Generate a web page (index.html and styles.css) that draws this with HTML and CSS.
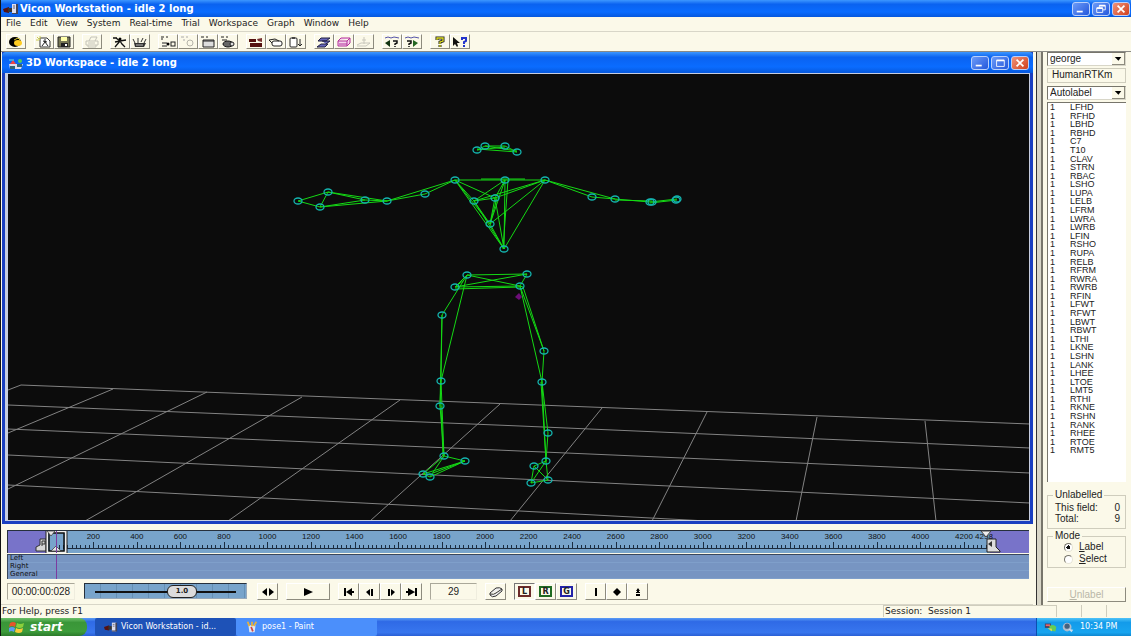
FILE: index.html
```html
<!DOCTYPE html>
<html lang="en">
<head>
<meta charset="utf-8">
<title>Vicon Workstation - idle 2 long</title>
<link rel="stylesheet" href="styles.css">
</head>
<body>
<svg class="defs" aria-hidden="true">
  <symbol id="camera" viewBox="0 0 16 12"><path d="M0 6l6-2v6l-5-1z" fill="#511"/><rect x="5" y="5" width="5" height="4" fill="#333"/><path d="M9 1h5v10H9z" fill="#dde"/><path d="M13 1h2v10h-6v-1h4z" fill="#445"/><path d="M10 3h2M10 5h2" stroke="#667"/></symbol>
  <symbol id="min" viewBox="0 0 18 14"><path d="M4 9h7v2H4z" fill="#fff"/></symbol>
  <symbol id="close" viewBox="0 0 18 14"><path d="M5 3l8 8M13 3l-8 8" stroke="#fff" stroke-width="2"/></symbol>
</svg>

<header class="titlebar">
  <svg class="app-icon"><use href="#camera"/></svg>
  <h1>Vicon Workstation - idle 2 long</h1>
  <div class="caption-buttons">
    <button aria-label="Minimize"><svg><use href="#min"/></svg></button>
    <button aria-label="Restore"><svg viewBox="0 0 18 14"><path d="M7 6V3h7v5h-3M4 6h7v5H4z" fill="none" stroke="#fff"/><path d="M4 6h7M7 3h7" stroke="#fff" stroke-width="2"/></svg></button>
    <button class="close" aria-label="Close"><svg><use href="#close"/></svg></button>
  </div>
</header>

<nav class="menubar">
  <a href="#">File</a><a href="#">Edit</a><a href="#">View</a><a href="#">System</a><a href="#">Real-time</a><a href="#">Trial</a><a href="#">Workspace</a><a href="#">Graph</a><a href="#">Window</a><a href="#">Help</a>
</nav>

<div class="toolbar">
  <div class="group">
    <button aria-label="Live"><svg viewBox="0 0 16 12"><ellipse cx="7" cy="6" rx="6" ry="5"/><ellipse cx="10" cy="7" rx="4" ry="3" fill="#fc2"/><path d="M6 4l4-2 2 2" stroke="#dc3" fill="none"/></svg></button>
  </div>
  <div class="group">
    <button aria-label="Open trial"><svg viewBox="0 0 16 12"><path d="M4 2h7l3 3v6H4z" fill="#fff" stroke="#333"/><path d="M6 10l3-4 3 4M7 5l4 1M9 3v3" stroke="#222" fill="none"/><path d="M1 1l3 3M4 0v3M0 4h3" stroke="#cc5"/></svg></button>
    <button aria-label="Save"><svg viewBox="0 0 16 12"><path d="M2 1h12v10H2z" fill="#775" stroke="#222"/><path d="M5 1h6v4H5z" fill="#ffa"/><path d="M5 7h7v4H5z" fill="#222"/><path d="M9 8h2v2H9z" fill="#fff"/></svg></button>
  </div>
  <div class="group">
    <button aria-label="Print" disabled><svg viewBox="0 0 16 12"><path d="M5 5l2-4h6l-2 4M2 5h12v4H2zM4 9v2h8V9M4 7h7" fill="none" stroke="#c4c3b8"/></svg></button>
  </div>
  <div class="group">
    <button aria-label="Capture subject"><svg viewBox="0 0 16 12"><path d="M1 2h4M4 2l4 3 6-1M8 5l-5 6M8 5l2 3 3 3M3 6l5-1" stroke="#111" fill="none" stroke-width="1.300"/><circle cx="8" cy="3" r="1.500"/></svg></button>
    <button aria-label="Calibrate"><svg viewBox="0 0 16 12"><path d="M2 7h12l-2 4H3z" fill="#333"/><path d="M3 7L1 3M6 7V2M9 6l2-4M12 7l2-4" stroke="#333"/><path d="M4 9h7" stroke="#bbb"/></svg></button>
  </div>
  <div class="group">
    <button aria-label="Reconstruct"><svg viewBox="0 0 16 12"><path d="M1 1h3M6 1h2M1 3h2M2 7h5M2 10h5" fill="none" stroke="#222"/><circle cx="8" cy="8" r="1.500"/><rect x="11" y="6" width="4" height="4" fill="none" stroke="#222"/></svg></button>
    <button aria-label="Label" disabled><svg viewBox="0 0 16 12"><path d="M1 1h3M6 1h2M3 4h2" stroke="#aaa"/><circle cx="10" cy="7" r="3" fill="none" stroke="#b5b4aa"/></svg></button>
    <button aria-label="Trajectory window"><svg viewBox="0 0 16 12"><path d="M1 1h3M6 1h2" stroke="#222"/><path d="M3 4h11v7H3z" fill="#ddd" stroke="#222"/><path d="M3 5h11" stroke="#222"/></svg></button>
    <button aria-label="Pipeline"><svg viewBox="0 0 16 12"><path d="M1 1h3M6 1h2M2 4h5" stroke="#222"/><ellipse cx="8" cy="8" rx="5" ry="3" fill="#666" stroke="#111"/><circle cx="12" cy="8" r="2" fill="#ddd" stroke="#222"/></svg></button>
  </div>
  <div class="group">
    <button aria-label="Video"><svg viewBox="0 0 16 12"><path d="M1 3h7v3H1zM2 7h12v4H2z" fill="#511"/><path d="M9 3l5-1v4l-4-1z" fill="#733"/></svg></button>
    <button aria-label="Tape"><svg viewBox="0 0 16 12"><rect x="4" y="5" width="10" height="5" rx="2" fill="#fff" stroke="#222"/><path d="M4 7L1 4l6-1 4 2" fill="none" stroke="#222"/></svg></button>
    <button aria-label="Copy down"><svg viewBox="0 0 16 12"><rect x="2" y="2" width="7" height="9" rx="1" fill="#fff" stroke="#222"/><path d="M4 1h3v2H4z" fill="#444"/><path d="M12 3v7M10 8l2 2 2-2" stroke="#222" fill="none"/></svg></button>
  </div>
  <div class="group">
    <button aria-label="3D workspace"><svg viewBox="0 0 16 12"><path d="M5 2h9l-4 3H2zM6 5h8l-4 3M5 8h7l-3 3H1z" fill="#66b" stroke="#224"/></svg></button>
    <button aria-label="Volume"><svg viewBox="0 0 16 12"><path d="M2 5l3-3h9v5l-3 3H2zM2 5h9l3-3M11 5v5M3 8h8" fill="#f6d5ee" stroke="#b2309b"/></svg></button>
    <button aria-label="Axes" disabled><svg viewBox="0 0 16 12"><path d="M8 1v7M6 4h4M1 9l4-2h9l-4 3H1" fill="none" stroke="#c8c7bc"/></svg></button>
  </div>
  <div class="group">
    <button aria-label="Previous unlabelled"><svg viewBox="0 0 16 12"><path d="M1 2l3-1 3 1 3-1 5 1" fill="none" stroke="#55a"/><path d="M6 4v7L1 7z" fill="#131"/><path d="M9 5h4v2l-2 1v1M11 10v1" fill="none" stroke="#111" stroke-width="1.500"/></svg></button>
    <button aria-label="Next unlabelled"><svg viewBox="0 0 16 12"><path d="M1 2l3-1 3 1 3-1 5 1" fill="none" stroke="#55a"/><path d="M9 4v7l5-4z" fill="#262"/><path d="M3 5h4v2L5 8v1M5 10v1" fill="none" stroke="#111" stroke-width="1.500"/></svg></button>
  </div>
  <div class="group">
    <button aria-label="Help"><svg viewBox="0 0 16 12"><path d="M5 4V2h6v3L8 6v2M8 9v2" fill="none" stroke="#222" stroke-width="3"/><path d="M5 4V2h6v3L8 6v2M8 9v2" fill="none" stroke="#dd2" stroke-width="1.300"/></svg></button>
    <button aria-label="Context help"><svg viewBox="0 0 16 12"><path d="M1 1v9l2-2 2 3 1-1-1-3h3z" fill="#111"/><path d="M10 4V2h4v3l-2 1v2M12 9v2" fill="none" stroke="#23c" stroke-width="2"/></svg></button>
  </div>
</div>

<main class="main">
  <div class="left">
    <section class="child">
      <header class="child-title">
        <svg class="app-icon" viewBox="0 0 16 12"><path d="M1 7h14l-2 5H2z" fill="#dde"/><path d="M2 7l3-4 3 4z" fill="#e44"/><circle cx="12" cy="4" r="2" fill="#5c5"/><path d="M2 9h5v3H2zM9 7h5v3H9z" fill="#367"/><path d="M1 3h5" stroke="#6dd"/></svg>
        <h2>3D Workspace - idle 2 long</h2>
        <div class="caption-buttons">
          <button aria-label="Minimize"><svg><use href="#min"/></svg></button>
          <button aria-label="Maximize"><svg viewBox="0 0 18 14"><path d="M5 4h9v7H5z" fill="none" stroke="#fff"/><path d="M5 4h9" stroke="#fff" stroke-width="2"/></svg></button>
          <button class="close" aria-label="Close"><svg><use href="#close"/></svg></button>
        </div>
      </header>
      <svg class="scene" viewBox="8 73 1021 448" preserveAspectRatio="xMidYMid slice" role="img" aria-label="Captured skeleton on floor grid">
        <path class="floor" d="M8 390L21 385L1030 424M8 405L520 426L1030 448M8 429L520 451L1030 473M8 455L520 479L1030 503M8 485L520 511L707 521M113 389L8 433M207 392L8 489M302 397L85 521M400 400L228 521M500 404L370 521M602 408L510 521M707 412L652 521M817 417L796 521M925 421L936 521"/>
        <path class="bones" d="M477 150L485 146L505 146L517 152L477 149M485 146L517 151M477 150L505 147
          M455 180L545 180M481 179H525M455 180L425 194L387 201L455 180M387 201L365 200L328 192L298 201L320 207L387 201L328 192L320 207L365 200
          M545 180L592 197L615 199L545 180M615 199L650 202L677 199M615 200L652 201M650 203L677 200
          M455 180L474 201L490 224L504 249L455 180L495 198M455 180L490 224M505 180L474 201L495 198L545 180L474 201M505 180L490 224L495 198L505 180L504 249L495 198M508 180L503 249M545 180L490 224M545 180L504 249M474 201L504 249M490 224L497 198
          M467 275L527 274L520 286L455 287L467 275L520 286M527 274L455 287M455 289L520 287
          M467 275L442 315L441 381L440 406L444 456L441 381L467 275M455 287L464 280M442 315L440 406M443 456L441 406
          M520 286L544 351L542 382L520 286L523 287L544 351M542 382L548 433L546 461L542 382M541 382L546 461
          M444 456L465 461L423 474L430 477L444 456L423 474M465 461L430 477M433 473L465 461
          M546 461L534 466L531 483L548 480L546 461L531 483M534 466L548 480"/>
        <g class="joints" id="joints"></g>
        <path d="M515 297l4-4 3 4-3 3z" fill="#6d0e78"/>
      </svg>
    </section>

    <svg class="ruler" viewBox="7 530 1022 23" role="img" aria-label="Timeline">
      <path d="M7 530H1029V553H7z" fill="#78a4cb"/>
      <path d="M7 530H46V553H7zM990 530H1029V553H990z" fill="#7873c9"/>
      <path d="M7 530.5H1029M7.500 530V553" stroke="#26303c"/>
      <g id="ticks"></g>
      <path d="M36 551v-4l4-2v-6h6v12z" fill="#d6d6d6" stroke="#333"/>
      <path d="M47 532h19v20H47z" fill="none" stroke="#eee" stroke-width="2"/>
      <path d="M49 533h15v18H49z" fill="none" stroke="#111" stroke-width="1.500"/>
      <path d="M67 531v22M46 531v22" stroke="#222"/>
      <path d="M47 531h8l-4 5zM51 551l5-5 5 5z" fill="#e5e5e5" stroke="#333" stroke-width=".7"/>
      <path d="M42 541v5M42 541h3v3h-3" stroke="#333" fill="none"/>
      <path d="M56.500 531V553" stroke="#7c3ca0"/>
      <path d="M981 531h10l-5 6z" fill="#eee" stroke="#444"/>
      <path d="M987 539h9v8l4 4v1h-13z" fill="#ddd" stroke="#222"/>
      <path d="M992 541v6l-4-3z" fill="#333"/>
    </svg>

    <div class="tracks">
      <div>Left</div><div>Right</div><div>General</div>
      <i class="playhead"></i>
    </div>

    <div class="controls">
      <output class="sunken timecode">00:00:00:028</output>
      <label class="speed"><span>1.0</span><input type="range" aria-label="Playback speed" min="0" max="164" value="100"></label>
      <div class="group"><button aria-label="Jog"><svg viewBox="0 0 16 12"><path d="M7 2v8L2 6zM9 2v8l5-4z"/></svg></button></div>
      <div class="group"><button class="play" aria-label="Play"><svg viewBox="0 0 16 12"><path d="M4 2l9 4-9 4z"/></svg></button></div>
      <div class="group">
        <button aria-label="First frame"><svg viewBox="0 0 16 12"><path d="M3 2h2v8H3zM11 2v8L5 6zM11 5h2v2h-2z"/></svg></button>
        <button aria-label="Previous frame"><svg viewBox="0 0 16 12"><path d="M8 3v7L4 6zM9 3h2v7H9z"/></svg></button>
        <button aria-label="Next frame"><svg viewBox="0 0 16 12"><path d="M8 3v7l4-4zM5 3h2v7H5z"/></svg></button>
        <button aria-label="Last frame"><svg viewBox="0 0 16 12"><path d="M11 2h2v8h-2zM4 2v8l7-4zM2 5h2v2H2z"/></svg></button>
      </div>
      <output class="sunken frame">29</output>
      <div class="group"><button aria-label="Erase"><svg viewBox="0 0 16 12"><path d="M2 7l6-5q4-1 6 1v2l-6 5q-4 2-6-1zM2 8q4 1 6-1l6-4" fill="#eee" stroke="#333"/></svg></button></div>
      <div class="group">
        <button class="chip red" aria-pressed="true"><span>L</span></button>
        <button class="chip green"><span>R</span></button>
        <button class="chip blue"><span>G</span></button>
      </div>
      <div class="group">
        <button aria-label="Event line"><svg viewBox="0 0 16 12"><path d="M7 2h2v8H7z"/></svg></button>
        <button aria-label="Event diamond"><svg viewBox="0 0 16 12"><path d="M8 2l4 4-4 4-4-4z"/></svg></button>
        <button aria-label="Event general"><svg viewBox="0 0 16 12"><path d="M8 2l2 3H9v1h1v1H6V6h1V5H6zM6 8h4v2H6z"/></svg></button>
      </div>
    </div>
  </div>

  <div class="splitter"></div>

  <aside class="side">
    <div class="combo"><select aria-label="Subject"><option>george</option></select><svg viewBox="0 0 13 11"><path d="M3 4h7l-3 4z"/></svg></div>
    <div class="model">HumanRTKm</div>
    <div class="combo"><select aria-label="Labelling mode"><option>Autolabel</option></select><svg viewBox="0 0 13 11"><path d="M3 4h7l-3 4z"/></svg></div>
    <ul class="markers" id="markers"></ul>
    <fieldset class="box unlabelled">
      <legend>Unlabelled</legend>
      <dl><dt>This field:</dt><dd>0</dd><dt>Total:</dt><dd>9</dd></dl>
    </fieldset>
    <fieldset class="box mode">
      <legend>Mode</legend>
      <label><input type="radio" name="mode" checked><span><u>L</u>abel</span></label>
      <label><input type="radio" name="mode"><span><u>S</u>elect</span></label>
    </fieldset>
    <button class="unlabel" disabled><u>U</u>nlabel</button>
  </aside>
</main>

<footer class="status">
  <span class="hint">For Help, press F1</span>
  <span class="session">Session:&nbsp; Session 1</span>
  <i></i><i></i><i></i>
</footer>

<div class="taskbar">
  <button class="start">
    <svg viewBox="0 0 16 14"><path d="M1 3q3-2 6 0L6 7Q3 5 0 7z" fill="#e8542a"/><path d="M8 3q3 2 7 0l-1 4q-3 2-7 0z" fill="#8bd03c"/><path d="M0 8q3-2 6 0l-1 4q-3-2-5 0z" fill="#5b9bf0"/><path d="M7 8q3 2 7 0l-1 4q-3 2-7 0z" fill="#f8cb38"/></svg>
    start
  </button>
  <button class="task active"><svg><use href="#camera"/></svg>Vicon Workstation - id...</button>
  <button class="task"><svg viewBox="0 0 16 12"><path d="M4 4h8l-1 8H5z" fill="#dfe6f2"/><path d="M5 5L3 0M8 5V0M10 5l3-5" stroke="#e8b23a" stroke-width="2"/><path d="M7 6l2 5" stroke="#c44" stroke-width="2"/></svg>pose1 - Paint</button>
  <div class="tray">
    <svg viewBox="0 0 16 12"><path d="M1 2h7v5H1z" fill="#446"/><path d="M2 3h5v2H2z" fill="#e66"/><path d="M6 5q5-3 8 1l-1 5-6-1z" fill="#6c5"/><path d="M4 7l5 1v3z" fill="#dd5"/></svg>
    <svg viewBox="0 0 16 12"><circle cx="7" cy="6" r="5" fill="#aebccd"/><circle cx="7" cy="5" r="3" fill="#45617e"/><path d="M8 8l6 1-2 3z" fill="#cde"/></svg>
    <time>10:34 PM</time>
  </div>
</div>
<script src="app.js"></script>
</body>
</html>
```

FILE: styles.css
```css
* { box-sizing: border-box; }

:root {
  --face: #fbf9e9;
  --line: #8d8b7e;
  --ui: "DejaVu Sans", Verdana, sans-serif;
  --dialog: "Liberation Sans", Arial, sans-serif;
}

body {
  margin: 0;
  height: 100vh;
  display: flex;
  flex-direction: column;
  overflow: hidden;
  background: var(--face);
  border-left: 1px solid #111;
  color: #222;
  font: 9px/12px var(--ui);
}

button, select, input { font: inherit; color: inherit; margin: 0; padding: 0; }
a { color: inherit; text-decoration: none; }
h1, h2 { margin: 0; font-size: 10px; line-height: 14px; }
.defs { position: absolute; width: 0; height: 0; }

.titlebar, .child-title {
  display: flex;
  align-items: center;
  color: #fff;
  background: linear-gradient(#3d97ff, #0a62f0 25%, #0a6cff 70%, #0658dd);
}
.titlebar { height: 17px; padding: 0 1px 0 2px; gap: 1px; flex: none; }
.app-icon { width: 16px; height: 12px; }
.caption-buttons { margin-left: auto; display: flex; gap: 2px; }
.caption-buttons button {
  width: 18px;
  height: 14px;
  border: 1px solid #b9d0fb;
  border-radius: 3px;
  background: linear-gradient(135deg, #6c9bf8, #2458dc);
}
.caption-buttons .close { background: linear-gradient(135deg, #f0937a, #d0401c); }
.caption-buttons svg { display: block; width: 100%; height: 100%; }

.menubar {
  display: flex;
  flex: none;
  gap: 9px;
  height: 15px;
  padding: 0 5px;
  border-bottom: 1px solid #d8d6c8;
}

.toolbar {
  display: flex;
  flex: none;
  gap: 8px;
  height: 20px;
  padding: 2px 5px;
  border-bottom: 1px solid #8a8a86;
}
.group { display: flex; }
.group button {
  width: 20px;
  border: 1px solid;
  border-color: #fff #8d8b7e #8d8b7e #fff;
  background: var(--face);
  display: grid;
  place-items: center;
}
.group svg { width: 16px; height: 12px; }

.main { flex: 1; min-height: 0; display: flex; }
.left { flex: 1; min-width: 0; display: flex; flex-direction: column; padding-right: 3px; }

.child {
  flex: 1;
  min-height: 0;
  display: flex;
  flex-direction: column;
  margin: 0 0 6px 1px;
  padding: 0 3px 3px;
  background: #1a3fc0;
}
.child-title {
  height: 21px;
  margin: 0 -3px;
  padding: 0 4px 0 6px;
  gap: 2px;
  border-radius: 4px 4px 0 0;
  flex: none;
}
.scene {
  display: block;
  flex: 1;
  min-height: 0;
  width: 100%;
  background: #0c0c0c;
  border: solid #c6cde0;
  border-width: 1px 1px 1px 3px;
}
.floor { fill: none; stroke: #838383; }
.bones { fill: none; stroke: #14d914; }
.joints { fill: none; stroke: #14b4ae; stroke-width: 1.3; }

.ruler { display: block; flex: none; width: calc(100% - 10px); margin-left: 6px; }
.ruler text { font: 8px var(--dialog); text-anchor: middle; fill: #111; }

.tracks {
  position: relative;
  flex: none;
  margin: 1px 4px 4px 6px;
  border-top: 1px solid #39475c;
  border-left: 1px solid #39475c;
  background: #7795c2;
  font: 7px/7px var(--ui);
  color: #111;
}
.tracks div { padding-left: 2px; border-bottom: 1px solid #7f9fca; }
.playhead { position: absolute; top: 0; bottom: 0; left: 48px; width: 1px; background: #7c3ca0; }

.controls {
  display: flex;
  flex: none;
  gap: 8px;
  height: 22px;
  padding: 0 0 4px 6px;
  font: 10px/16px var(--dialog);
  border-bottom: 1px solid #d8d6c8;
}
.sunken {
  border: 1px solid;
  border-color: #aaa89a #efedde #efedde #aaa89a;
  text-align: center;
}
.timecode { width: 68px; }
.frame { width: 47px; }
.controls .group button { width: 21px; }
.controls .group .play { width: 44px; }
.speed {
  display: grid;
  width: 163px;
  margin: 0 2px 1px 1px;
  background: repeating-linear-gradient(90deg, transparent 0 15px, #6690b5 15px 16px), #78a4cb;
  border: 1px solid #26303c;
  border-right-color: #9ab;
  border-bottom-color: #9ab;
}
.speed span, .speed input { grid-area: 1 / 1; }
.speed span {
  z-index: 1;
  width: 30px;
  margin: 1px 0 1px 82px;
  border: 1px solid #222;
  border-radius: 6px;
  background: #dcdcdc;
  font: bold 7px/11px var(--ui);
  text-align: center;
  pointer-events: none;
}
.speed input {
  appearance: none;
  width: calc(100% - 20px);
  margin: 0 10px;
  background: linear-gradient(#111, #111) center / 100% 2px no-repeat;
}
.speed input::-webkit-slider-thumb { appearance: none; width: 28px; height: 11px; }
.controls .chip span {
  width: 13px;
  border: 2px solid;
  font: bold 8px/7px var(--ui);
}
.chip.red span { border-color: #6b2a2a; }
.chip.green span { border-color: #1f6a22; }
.chip.blue span { border-color: #2424a8; }
.group .chip[aria-pressed="true"] { border-color: #777 #fff #fff #777; }

.splitter {
  width: 8px;
  background: linear-gradient(90deg, #333 0 1px, #d8d6c8 1px 5px, #77756b 5px 7px, var(--face) 7px);
}

.side {
  display: flex;
  flex-direction: column;
  width: 87px;
  padding: 0 5px 3px 3px;
  font: 10px/12px var(--dialog);
}
.combo {
  display: grid;
  grid-template-columns: 1fr 13px;
  height: 14px;
  margin-bottom: 2px;
  border: 1px solid;
  border-color: #77756b #d8d6c8 #d8d6c8 #77756b;
  background: #fff;
}
.combo select {
  grid-area: 1 / 1 / 2 / 3;
  appearance: none;
  border: 0;
  background: none;
  padding-left: 2px;
  line-height: 12px;
}
.combo svg {
  grid-area: 1 / 2;
  width: 13px;
  height: 12px;
  background: var(--face);
  border-right: 1px solid var(--line);
  border-bottom: 1px solid var(--line);
  pointer-events: none;
}
.model {
  height: 15px;
  margin-bottom: 3px;
  padding-left: 4px;
  border: 1px solid #cfcdbd;
}
.markers {
  flex: 1;
  min-height: 0;
  display: grid;
  grid-auto-rows: minmax(0, 1fr);
  margin: 0 0 8px;
  padding: 0 0 27px 2px;
  list-style: none;
  background: #fff;
  border: solid #77756b;
  border-width: 1px 0 0 1px;
  font-size: 9px;
  line-height: 8px;
}
.markers li { display: grid; grid-template-columns: 20px 1fr; }

.box {
  min-width: 0;
  margin: 0 0 2px;
  padding: 0 5px 2px 7px;
  border: 1px solid #cfcdbd;
}
.box legend { padding: 0 2px; margin-left: -2px; line-height: 10px; }
.box dl { display: grid; grid-template-columns: 1fr auto; margin: 2px 0; line-height: 11px; }
.box dd { margin: 0; }
.mode label { display: flex; align-items: center; gap: 6px; padding-left: 9px; }
.mode input {
  appearance: none;
  width: 9px;
  height: 9px;
  border: 1px solid;
  border-color: #77756b #e6e4d6 #e6e4d6 #77756b;
  border-radius: 50%;
  background: #fff;
}
.mode input:checked { background: radial-gradient(#111 0 2px, #fff 2px); }
.unlabel {
  height: 15px;
  margin-top: 17px;
  border: 1px solid;
  border-color: #fff #8d8b7e #8d8b7e #fff;
  background: var(--face);
  color: #b9b7a8;
}

.status { display: flex; flex: none; height: 13px; padding: 0 0 1px 1px; }
.hint { flex: 1; }
.session { width: 173px; padding-left: 1px; border: solid #cfcdbd; border-width: 1px 0 0 1px; line-height: 11px; }
.status i { width: 25px; border-left: 1px solid #cfcdbd; }

.taskbar {
  display: flex;
  flex: none;
  height: 18px;
  background: linear-gradient(#5a9cf5, #2f6ae6 20%, #3876ee 80%, #2a5fd5);
  color: #fff;
  font-size: 8px;
}
.start {
  display: flex;
  align-items: center;
  gap: 5px;
  width: 86px;
  padding-left: 8px;
  margin-right: 8px;
  border: 0;
  border-radius: 0 8px 8px 0;
  background: linear-gradient(#6cc068, #3a9638 25%, #3d9c3b 75%, #2c7a2b);
  font: italic bold 12px/16px var(--ui);
}
.start svg { width: 16px; height: 14px; }
.task {
  display: flex;
  align-items: center;
  gap: 3px;
  width: 141px;
  padding-left: 9px;
  border: 0;
  border-radius: 2px;
  background: #4b8ffb;
}
.task.active { background: #1e52b7; }
.task svg { width: 14px; height: 12px; }
.tray {
  display: flex;
  align-items: center;
  gap: 3px;
  width: 95px;
  margin-left: auto;
  padding-left: 7px;
  border-left: 1px solid #0c4fb0;
  background: linear-gradient(#4fc3f8, #139bea 25%, #18a5f0 80%, #0f87d0);
}
.tray svg { width: 14px; height: 12px; }
.tray time { margin-left: 2px; }
```

FILE: app.js
```js
const SVG = "http://www.w3.org/2000/svg";

function add(parent, tag, attrs, text) {
  const node = document.createElementNS(SVG, tag);
  for (const key in attrs) node.setAttribute(key, attrs[key]);
  if (text) node.textContent = text;
  parent.appendChild(node);
}

const joints = [
  [477, 150], [485, 146], [505, 146], [517, 152], [455, 180], [505, 180], [545, 180],
  [425, 194], [387, 201], [365, 200], [328, 192], [320, 207], [298, 201],
  [592, 197], [615, 199], [650, 202], [652, 202], [676, 200], [677, 199],
  [474, 201], [495, 198], [490, 224], [504, 249],
  [467, 275], [527, 274], [455, 287], [520, 286],
  [442, 315], [441, 381], [440, 406], [444, 456], [465, 461], [423, 474], [430, 477],
  [544, 351], [542, 382], [548, 433], [546, 461], [534, 466], [548, 480], [531, 483]
];
const jointLayer = document.getElementById("joints");
joints.forEach(([cx, cy]) => add(jointLayer, "ellipse", { cx, cy, rx: 4, ry: 3 }));

/* Ruler: one tick per 20 frames, a label per 200. */
const ticks = document.getElementById("ticks");
const frameX = frame => 49.8 + frame * 0.21765;
for (let frame = 40; frame <= 4300; frame += 20) {
  const major = frame % 200 === 0;
  const x = Math.round(frameX(frame)) + 0.5;
  add(ticks, "path", { d: `M${x} ${major ? 542 : 545}V549`, stroke: "#1b2c40" });
  if (major) add(ticks, "text", { x: frameX(frame), y: 539 }, String(frame));
}
add(ticks, "text", { x: 984, y: 539 }, "4298");
add(ticks, "path", { d: "M68 548.5H986", stroke: "#1b2c40" });

const names = ("LFHD RFHD LBHD RBHD C7 T10 CLAV STRN RBAC LSHO LUPA LELB LFRM LWRA LWRB LFIN " +
  "RSHO RUPA RELB RFRM RWRA RWRB RFIN LFWT RFWT LBWT RBWT LTHI LKNE LSHN LANK LHEE LTOE LMT5 " +
  "RTHI RKNE RSHN RANK RHEE RTOE RMT5").split(" ");
const list = document.getElementById("markers");
names.forEach(name => {
  const row = document.createElement("li");
  row.innerHTML = `<span>1</span><span>${name}</span>`;
  list.appendChild(row);
});
```
